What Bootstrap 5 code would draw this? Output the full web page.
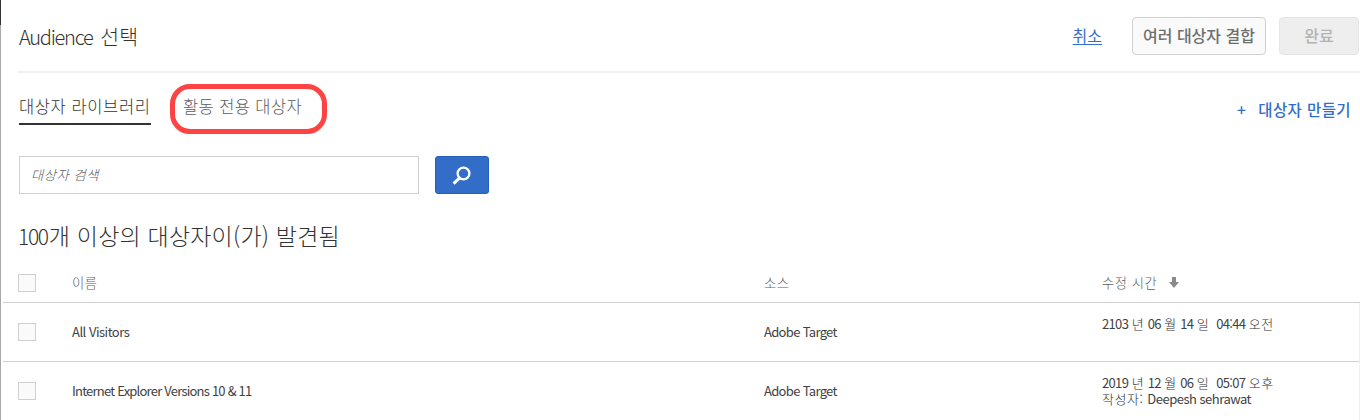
<!DOCTYPE html>
<html lang="ko">
<head>
<meta charset="utf-8">
<title>Audience 선택</title>
<link href="https://cdn.jsdelivr.net/npm/bootstrap@5.3.0/dist/css/bootstrap.min.css" rel="stylesheet">
<style>
body{font-family:"Noto Sans CJK KR",sans-serif;font-weight:300;color:#323232;font-size:13px;line-height:16px;width:1360px;height:420px;overflow:hidden;background:#fff}
.edge{width:1px;height:420px;background:linear-gradient(#323232 0 25px,#a9a7ab 25px)}
.dialog-page{width:1359px;height:420px}
.t{white-space:nowrap;display:block}
.top{height:73px;border-bottom:2px solid #f1f1f1;margin-left:17px}
.title{font-size:20.5px;line-height:24px;margin:24px 0 0 1px;font-weight:300;color:#323232}
.title .word{font-size:20px;letter-spacing:-1.25px;margin-right:2px}
.cancel{font-size:16px;font-weight:400;color:#326ec8;line-height:20px;margin:25px 30px 0 0;text-decoration:underline;text-underline-offset:2px}
.act{height:38px;margin-top:17px;padding:0;border:1px solid #d0d0d0;border-radius:4px;background:#fafafa;color:#6e6e6e;font-size:16px;font-weight:500;line-height:32px}
.act .t{margin-top:-2px}
.combine{width:134px;margin-right:13px}
.done,.done:disabled{width:80px;background:#eee;border-color:#e4e4e4;color:#b3b3b3;opacity:1;margin-right:1px}
.tabs-row{height:83px;margin-left:18px}
.tab{font-size:16.5px;line-height:24px;height:31px;margin-top:21px;letter-spacing:.6px}
.tab.on{width:132px;border-bottom:2px solid #323232;margin-right:32px}
.tab.off{color:#5c5c5c;letter-spacing:.4px}
.ring{left:-13px;top:-10px;width:157px;height:50px;border:5px solid #ff4343;border-radius:20px}
.create{color:#326ec8;font-weight:500;font-size:15.5px;line-height:20px;margin:26px 9px 0 0;letter-spacing:.4px}
.search-row{height:38px;margin-left:18px}
.search-row .form-control{width:400px;height:38px;border:1px solid #d0d0d0;border-radius:0;padding:0 11px 2px;font-size:13.3px;font-weight:300;margin-right:16px;letter-spacing:.5px}
.search-row .form-control::placeholder{font-style:italic;color:#606060;opacity:1}
.go{width:54px;height:38px;background:#326ec8;border:1px solid #2660b8;border-radius:3px;padding:0}
.found{font-size:23px;line-height:28px;margin:27px 0 0 17px;height:39px;font-weight:300;letter-spacing:.2px}
.found .num{font-size:21px;letter-spacing:-1.3px;margin-right:1px}
.line{display:grid;grid-template-columns:54px 692px 338px 1fr;margin-left:2px;padding-left:15px;width:1356px;height:59px;border-bottom:1px solid #d0d0d0;align-items:center}
.line.head{height:43px;color:#606060;width:1357px;font-size:13.3px;letter-spacing:.5px;padding-top:3px}
.box{width:18px;height:18px;border:1px solid #d0d0d0;background:#fafafa}
.lat{font-weight:400;color:#424242;letter-spacing:-.67px}
.lat.wide{letter-spacing:-.5px}
.lat.tight{letter-spacing:-.78px}
.when{align-self:start;margin-top:13px;letter-spacing:.5px}
.date{word-spacing:-.65px}
.rail{width:2px;height:118px;background:#f0f0f0}
</style>
</head>
<body>
<div class="d-flex">
<div class="edge"></div>
<main class="dialog-page">
<header class="top d-flex">
<h1 class="title t me-auto"><span class="word">Audience</span> 선택</h1>
<a class="cancel t" href="#">취소</a>
<button class="btn act combine"><span class="t">여러 대상자 결합</span></button>
<button class="btn act done" disabled><span class="t">완료</span></button>
</header>
<nav class="tabs-row d-flex">
<div class="tab on"><span class="t">대상자 라이브러리</span></div>
<div class="tab off position-relative me-auto"><span class="t">활동 전용 대상자</span><div class="ring position-absolute"></div></div>
<div class="create d-flex"><span class="t me-2 pe-1">+</span><span class="t">대상자 만들기</span></div>
</nav>
<form class="search-row d-flex">
<input class="form-control" placeholder="대상자 검색">
<button type="button" class="btn go d-flex align-items-center justify-content-center" aria-label="검색"><svg width="20" height="20" viewBox="0 0 20 20" fill="none" stroke="#fff"><circle cx="11.5" cy="8.5" r="5.9" stroke-width="2.3"/><path d="M7.6 12.8 1.6 18.6" stroke-width="3"/></svg></button>
</form>
<h2 class="found t"><span class="num">100</span>개 이상의 대상자이(가) 발견됨</h2>
<div class="line head"><i class="box"></i><span class="t">이름</span><span class="t">소스</span><span class="d-flex align-items-center"><span class="t">수정 시간</span><svg class="ms-2" width="14" height="12" viewBox="-4 0 14 12"><path d="M3 0h4v5h3l-5 6L0 5h3z" fill="#8a8a8a"/></svg></span></div>
<div class="d-flex">
<div>
<div class="line"><i class="box"></i><span class="t lat wide">All Visitors</span><span class="t lat">Adobe Target</span><div class="when"><span class="t date"><span class="lat">2103</span> 년 <span class="lat">06</span> 월 <span class="lat">14</span> 일 &nbsp;<span class="lat">04:44</span> 오전</span></div></div>
<div class="line"><i class="box"></i><span class="t lat tight">Internet Explorer Versions 10 &amp; 11</span><span class="t lat">Adobe Target</span><div class="when"><span class="t date"><span class="lat">2019</span> 년 <span class="lat">12</span> 월 <span class="lat">06</span> 일 &nbsp;<span class="lat">05:07</span> 오후</span><span class="t">작성자: <span class="lat wide">Deepesh sehrawat</span></span></div></div>
</div>
<div class="rail"></div>
</div>
</main>
</div>
<script src="https://cdn.jsdelivr.net/npm/bootstrap@5.3.0/dist/js/bootstrap.bundle.min.js"></script>
</body>
</html>
